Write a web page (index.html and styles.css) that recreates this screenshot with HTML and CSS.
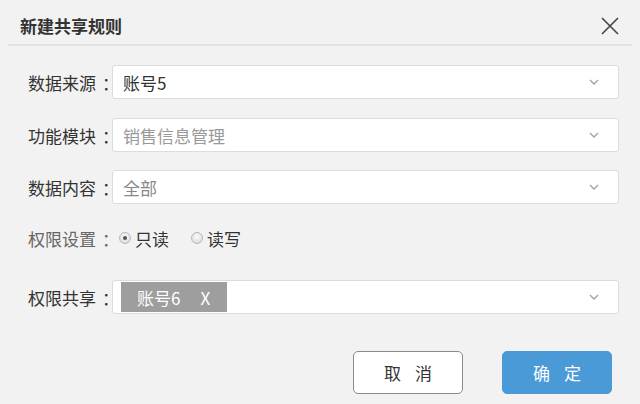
FILE: index.html
```html
<!DOCTYPE html>
<html lang="zh">
<head>
<meta charset="utf-8">
<link rel="stylesheet" href="styles.css">
</head>
<body>
<div class="dialog">
  <div class="header">
    <div class="title">新建共享规则</div>
    <svg class="close" width="18" height="18" viewBox="0 0 18 18"><path d="M1 1 L17 17 M17 1 L1 17" stroke="#444" stroke-width="1.6" fill="none"/></svg>
  </div>
  <div class="form">
    <div class="row">
      <div class="label">数据来源<span class="colon">：</span></div>
      <div class="select"><span class="val">账号5</span><svg class="chev" width="10" height="6" viewBox="0 0 10 6"><path d="M1 1 L5 5 L9 1" stroke="#a0a0a0" stroke-width="1.3" fill="none"/></svg></div>
    </div>
    <div class="row">
      <div class="label">功能模块<span class="colon">：</span></div>
      <div class="select"><span class="val ph">销售信息管理</span><svg class="chev" width="10" height="6" viewBox="0 0 10 6"><path d="M1 1 L5 5 L9 1" stroke="#a0a0a0" stroke-width="1.3" fill="none"/></svg></div>
    </div>
    <div class="row">
      <div class="label">数据内容<span class="colon">：</span></div>
      <div class="select"><span class="val ph2">全部</span><svg class="chev" width="10" height="6" viewBox="0 0 10 6"><path d="M1 1 L5 5 L9 1" stroke="#a0a0a0" stroke-width="1.3" fill="none"/></svg></div>
    </div>
    <div class="row radio-row">
      <div class="label light">权限设置<span class="colon">：</span></div>
      <div class="radios">
        <label class="radio"><span class="dot checked"></span>只读</label>
        <label class="radio"><span class="dot"></span>读写</label>
      </div>
    </div>
    <div class="row share">
      <div class="label">权限共享<span class="colon">：</span></div>
      <div class="select tags"><span class="tag"><span>账号6</span><span class="tag-x">X</span></span><svg class="chev" width="10" height="6" viewBox="0 0 10 6"><path d="M1 1 L5 5 L9 1" stroke="#a0a0a0" stroke-width="1.3" fill="none"/></svg></div>
    </div>
  </div>
  <div class="footer">
    <button class="btn cancel">取 消</button>
    <button class="btn ok">确 定</button>
  </div>
</div>
</body>
</html>
```
FILE: styles.css
```css
html, body {
  margin: 0;
  padding: 0;
  background: #f2f2f2;
  font-family: "Noto Sans CJK SC", "Noto Sans", sans-serif;
  color: #333;
}
.dialog {
  width: 640px;
  height: 404px;
  box-sizing: border-box;
}
.header {
  margin: 0 8px;
  height: 44px;
  border-bottom: 2px solid #e2e2e2;
  display: flex;
  align-items: center;
  justify-content: space-between;
  padding: 0 13px 0 12px;
}
.title {
  font-size: 17px;
  font-weight: bold;
  color: #333;
  padding-top: 6px;
}
.close {
  margin-top: 7px;
}
.form {
  padding: 19px 21px 0 28px;
  display: flex;
  flex-direction: column;
}
.row {
  display: flex;
  align-items: center;
  height: 34px;
  margin-bottom: 19px;
}
.row:nth-child(2) { margin-bottom: 18px; }
.radio-row {
  margin-top: -2px;
  margin-bottom: 25px;
}
.label {
  width: 84px;
  flex: none;
  font-size: 17px;
  color: #333;
  white-space: nowrap;
  display: flex;
  align-items: center;
}
.colon {
  display: inline-block;
  width: 16px;
  text-align: center;
  text-indent: 6px;
}
.label.light {
  color: #666;
}
.select {
  flex: 1;
  height: 34px;
  box-sizing: border-box;
  background: #fff;
  border: 1px solid #dcdcdc;
  border-radius: 3px;
  display: flex;
  align-items: center;
  padding: 0 19px 0 10px;
}
.val {
  flex: 1;
  font-size: 17px;
  color: #333;
}
.val.ph { color: #999; }
.val.ph2 { color: #888; }
.chev { flex: none; }
.radios {
  display: flex;
  align-items: center;
  font-size: 17px;
  color: #333;
  margin-left: 7px;
}
.radio {
  display: flex;
  align-items: center;
  margin-right: 22px;
}
.dot {
  width: 12px;
  height: 12px;
  border-radius: 50%;
  border: 1px solid #b8b8b8;
  background: radial-gradient(circle at 50% 35%, #fafafa, #d6d6d6);
  margin-right: 4px;
  position: relative;
  box-sizing: border-box;
}
.dot.checked::after {
  content: "";
  position: absolute;
  left: 3px;
  top: 3px;
  width: 4px;
  height: 4px;
  border-radius: 50%;
  background: #555;
}
.tags {
  padding-left: 8px;
}
.tag {
  flex: none;
  height: 30px;
  width: 106px;
  box-sizing: border-box;
  background: #9e9e9e;
  color: #fff;
  font-size: 17px;
  display: flex;
  align-items: center;
  padding-left: 16px;
  margin-right: auto;
}
.tag-x {
  margin-left: 20px;
}
.footer {
  display: flex;
  justify-content: flex-end;
  gap: 39px;
  padding: 18px 28px 0 0;
}
.btn {
  width: 110px;
  height: 43px;
  border-radius: 5px;
  font-family: "Noto Sans CJK SC", sans-serif;
  font-size: 17px;
  letter-spacing: 5px;
  padding: 0 0 0 5px;
  cursor: pointer;
}
.cancel {
  background: #fff;
  border: 1px solid #8a8a8a;
  color: #333;
}
.ok {
  background: #4a9ad8;
  border: 1px solid #4a9ad8;
  color: #fff;
}
```
